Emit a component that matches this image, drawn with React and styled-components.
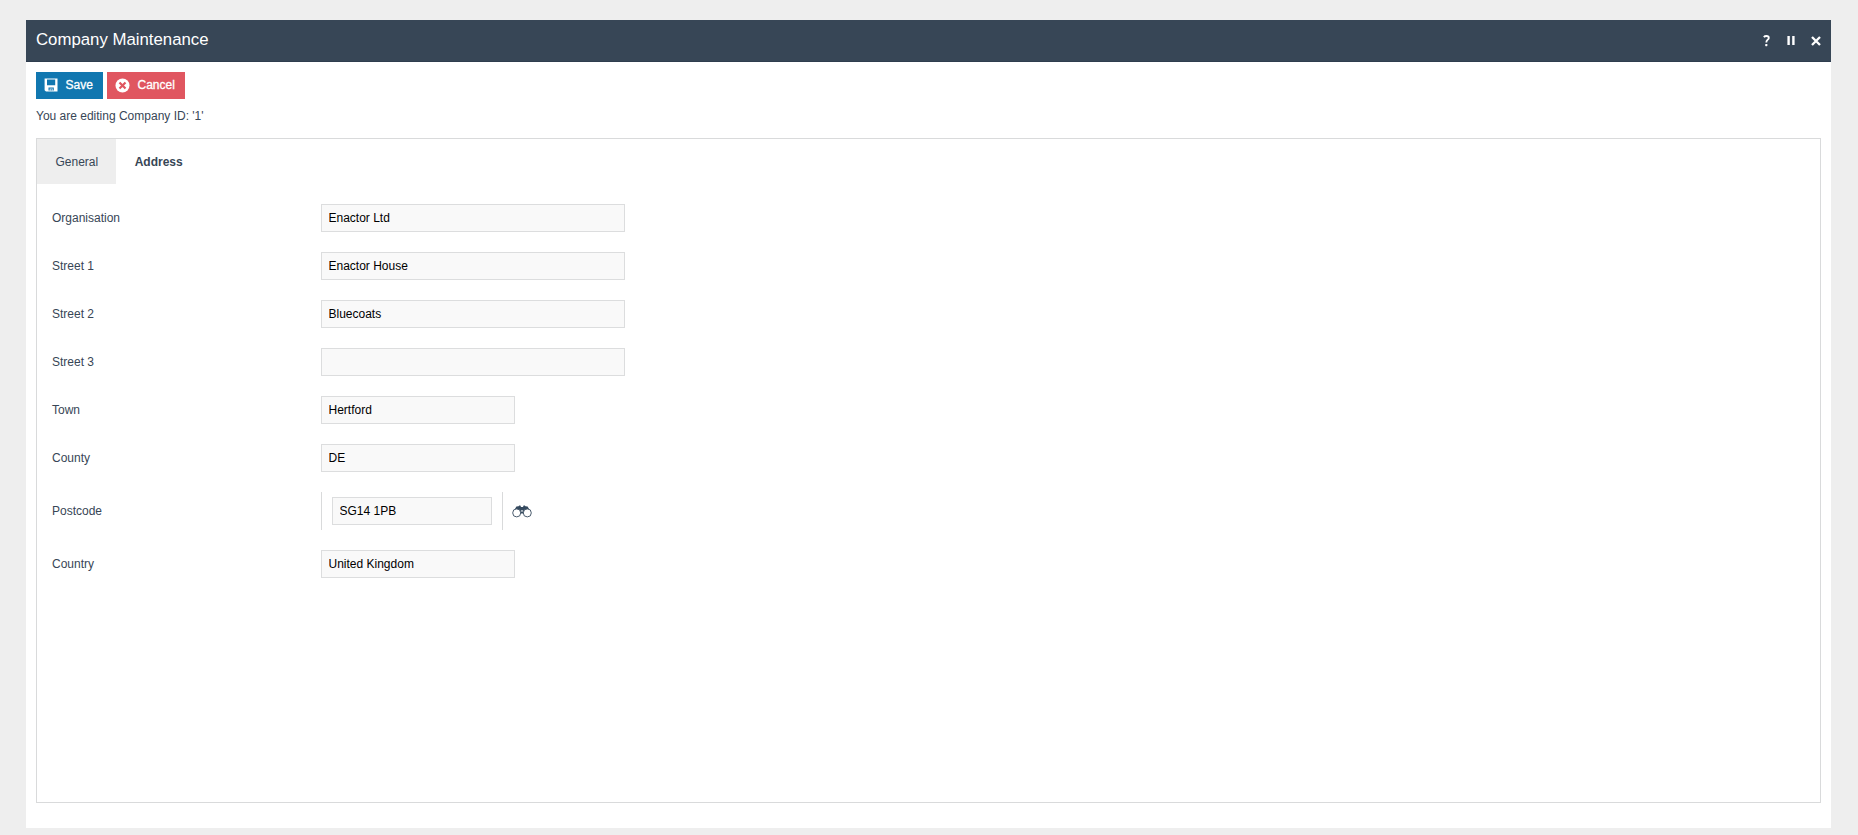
import styled, { createGlobalStyle } from "styled-components";

const fields = [
  { label: "Organisation", value: "Enactor Ltd", width: 304 },
  { label: "Street 1", value: "Enactor House", width: 304 },
  { label: "Street 2", value: "Bluecoats", width: 304 },
  { label: "Street 3", value: "", width: 304 },
  { label: "Town", value: "Hertford", width: 194 },
  { label: "County", value: "DE", width: 194 },
  { label: "Postcode", value: "SG14 1PB", width: 160, lookup: true },
  { label: "Country", value: "United Kingdom", width: 194 },
];

export default function App() {
  return (
    <>
      <GlobalStyle />
      <StyledWindow>
        <StyledHeader>
          <StyledTitle>Company Maintenance</StyledTitle>
          <StyledHeaderActions>
            <StyledIconButton aria-label="Help">
              <HelpIcon />
            </StyledIconButton>
            <StyledIconButton aria-label="Pause">
              <PauseIcon />
            </StyledIconButton>
            <StyledIconButton aria-label="Close">
              <CloseIcon />
            </StyledIconButton>
          </StyledHeaderActions>
        </StyledHeader>
        <StyledBody>
          <StyledToolbar>
            <StyledButton $color="#1177b0" $width={67}>
              <SaveIcon />
              Save
            </StyledButton>
            <StyledButton $color="#e05660" $width={78}>
              <CancelIcon />
              Cancel
            </StyledButton>
          </StyledToolbar>
          <StyledMessage>You are editing Company ID: '1'</StyledMessage>
          <StyledPanel>
            <StyledTabs>
              <StyledTab>General</StyledTab>
              <StyledTab $active>Address</StyledTab>
            </StyledTabs>
            <StyledForm>
              {fields.map((field) => (
                <Field key={field.label} {...field} />
              ))}
            </StyledForm>
          </StyledPanel>
        </StyledBody>
      </StyledWindow>
    </>
  );
}

function Field({ label, value, width, lookup }) {
  const input = (
    <StyledInput
      type="text"
      aria-label={label}
      defaultValue={value}
      $width={width}
    />
  );

  return (
    <StyledRow>
      <StyledLabel>{label}</StyledLabel>
      {lookup ? (
        <>
          <StyledLookup>{input}</StyledLookup>
          <StyledLookupButton aria-label="Find address">
            <BinocularsIcon />
          </StyledLookupButton>
        </>
      ) : (
        input
      )}
    </StyledRow>
  );
}

function HelpIcon() {
  return (
    <svg width="8" height="12" viewBox="0 0 8 12" fill="none">
      <path
        d="M0.8 2.1C1.5 1.3 2.3 1 3.4 1C4.9 1 5.8 1.7 5.8 2.9C5.8 4.7 3.3 4.8 3.3 7.4"
        stroke="#fff"
        strokeWidth="1.8"
      />
      <rect x="2.2" y="9" width="2.2" height="2.2" rx="0.6" fill="#fff" />
    </svg>
  );
}

function PauseIcon() {
  return (
    <svg width="8" height="9" viewBox="0 0 8 9" fill="#fff">
      <rect x="0.4" width="2.4" height="9" />
      <rect x="5.2" width="2.4" height="9" />
    </svg>
  );
}

function CloseIcon() {
  return (
    <svg width="10" height="10" viewBox="0 0 10 10" stroke="#fff">
      <path d="M1 1L9 9M9 1L1 9" strokeWidth="2.3" />
    </svg>
  );
}

function SaveIcon() {
  return (
    <svg width="14" height="14" viewBox="0 0 14 14">
      <path
        fillRule="evenodd"
        fill="#fff"
        d="M0.6 0.6H13.5V13.5H2L0.6 12.3ZM3 1.6V7.2H11.2V1.6ZM4.5 9.6V12.6H9.8V9.6Z"
      />
      <path fill="#fff" fillOpacity="0.7" d="M5.6 10.4H8.8V12.8H7.8V11.2H6.8V12.8H5.6Z" />
    </svg>
  );
}

function CancelIcon() {
  return (
    <svg width="15" height="15" viewBox="0 0 15 15">
      <circle cx="7.5" cy="7.5" r="7" fill="#fff" />
      <path d="M4.5 4.5L10.5 10.5M10.5 4.5L4.5 10.5" stroke="#e05660" strokeWidth="2.2" />
    </svg>
  );
}

function BinocularsIcon() {
  return (
    <svg width="20" height="13" viewBox="0 0 20 13">
      <path
        fill="#354a5f"
        d="M2.8 4.2L4.4 1.6L6.6 1.2L7.2 0.4H8.4L9 2H11L11.6 0.4H12.8L13.4 1.2L15.6 1.6L17.2 4.2L12 8.6H8Z"
      />
      <g fill="#fff" stroke="#4a5b6d" strokeWidth="1">
        <circle cx="4.7" cy="7.9" r="4" />
        <circle cx="15.3" cy="7.9" r="4" />
      </g>
      <rect x="9.1" y="5" width="1.8" height="1.8" fill="#b9c1c9" />
    </svg>
  );
}

const GlobalStyle = createGlobalStyle`
  * {
    box-sizing: border-box;
  }

  body {
    margin: 0;
    background: #eee;
    color: #374656;
    font-family: "Liberation Sans", Arial, sans-serif;
    font-size: 12px;
  }

  svg {
    display: block;
    flex-shrink: 0;
  }
`;

const StyledWindow = styled.main`
  display: flex;
  flex-direction: column;
  height: 808px;
  margin: 20px 27px 7px 26px;
  background: #fff;
`;

const StyledHeader = styled.header`
  display: flex;
  justify-content: space-between;
  align-items: center;
  height: 42px;
  padding: 0 10px;
  background: #374656;
  border-bottom: 1px solid #2f3d4e;
`;

const StyledTitle = styled.h1`
  margin: 0;
  padding-bottom: 2px;
  color: #fff;
  font-size: 16.8px;
  font-weight: 400;
  line-height: 18px;
`;

const StyledHeaderActions = styled.div`
  display: flex;
  align-items: center;
  gap: 16px;
`;

const StyledIconButton = styled.button`
  display: flex;
  padding: 0;
  border: 0;
  background: none;
`;

const StyledBody = styled.div`
  display: flex;
  flex: 1;
  flex-direction: column;
  padding: 10px 10px 25px;
`;

const StyledToolbar = styled.div`
  display: flex;
  gap: 4px;
`;

const StyledButton = styled.button`
  display: flex;
  align-items: center;
  gap: 7.5px;
  width: ${({ $width }) => $width}px;
  height: 27px;
  padding: 0 8px 1px;
  border: 0;
  background: ${({ $color }) => $color};
  color: #fff;
  font-family: inherit;
  font-size: 12px;
  font-weight: 400;
  line-height: 14px;
  -webkit-text-stroke: 0.3px #fff;
`;

const StyledMessage = styled.p`
  margin: 10px 0 15px;
  line-height: 14px;
`;

const StyledPanel = styled.section`
  flex: 1;
  border: 1px solid #d9dadb;
`;

const StyledTabs = styled.nav`
  display: flex;
  height: 45px;
`;

const StyledTab = styled.button`
  padding: 0 18px 0 18.5px;
  border: 0;
  background: ${({ $active }) => ($active ? "#fff" : "#eee")};
  color: inherit;
  font-family: inherit;
  font-size: 12px;
  font-weight: ${({ $active }) => ($active ? 700 : 400)};
`;

const StyledForm = styled.form`
  display: flex;
  flex-direction: column;
  gap: 20px;
  padding: 20px 15px;
`;

const StyledRow = styled.div`
  display: flex;
  align-items: center;
`;

const StyledLabel = styled.label`
  width: 269px;
`;

const StyledInput = styled.input`
  width: ${({ $width }) => $width}px;
  height: 28px;
  padding: 0 6.5px;
  border: 1px solid #dcddde;
  background: #f9f9f9;
  color: #000;
  font-family: inherit;
  font-size: 12px;
`;

const StyledLookup = styled.div`
  padding: 5px 10px;
  border: solid #d9dadb;
  border-width: 0 1px;
`;

const StyledLookupButton = styled.button`
  display: flex;
  margin-left: 9px;
  padding: 0;
  border: 0;
  background: none;
`;
